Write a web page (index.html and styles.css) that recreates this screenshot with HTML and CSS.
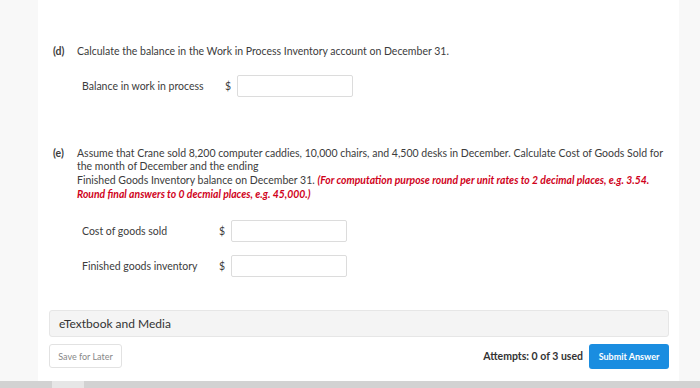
FILE: index.html
```html
<!DOCTYPE html>
<html lang="en">
<head>
<meta charset="utf-8">
<title>Question</title>
<link rel="stylesheet" href="styles.css">
</head>
<body>
<div class="page">
  <div class="side side-left"></div>
  <main class="main">
    <section class="part part-d">
      <div class="prompt">
        <span class="letter">(d)</span>
        <p class="text">Calculate the balance in the Work in Process Inventory account on December 31.</p>
      </div>
      <div class="answer-row row-d">
        <span class="label label-d">Balance in work in process</span>
        <span class="dollar">$</span>
        <span class="input"></span>
      </div>
    </section>

    <section class="part part-e">
      <div class="prompt">
        <span class="letter">(e)</span>
        <p class="text">Assume that Crane sold 8,200 computer caddies, 10,000 chairs, and 4,500 desks in December. Calculate Cost of Goods Sold for the month of December and the ending<br>Finished Goods Inventory balance on December 31. <em class="note">(For computation purpose round per unit rates to 2 decimal places, e.g. 3.54.</em> <em class="note">Round final answers to 0 decmial places, e.g. 45,000.)</em></p>
      </div>
      <div class="answer-row row-cogs">
        <span class="label label-e">Cost of goods sold</span>
        <span class="dollar">$</span>
        <span class="input input-e"></span>
      </div>
      <div class="answer-row row-fgi">
        <span class="label label-e">Finished goods inventory</span>
        <span class="dollar">$</span>
        <span class="input input-e"></span>
      </div>
    </section>

    <div class="media">eTextbook and Media</div>

    <div class="footer">
      <button class="save">Save for Later</button>
      <div class="footer-right">
        <span class="attempts">Attempts: 0 of 3 used</span>
        <button class="submit">Submit Answer</button>
      </div>
    </div>
  </main>
  <div class="side side-right"></div>
</div>
<div class="hscroll">
  <span class="hscroll-gap"></span>
  <span class="hscroll-thumb"></span>
</div>
</body>
</html>
```

FILE: styles.css
```css
html, body {
  margin: 0;
  padding: 0;
}
body {
  width: 700px;
  height: 388px;
  overflow: hidden;
  font-family: Lato, "Open Sans", "Liberation Sans", sans-serif;
  color: #3c3c3c;
  display: flex;
  flex-direction: column;
  background: #fff;
}
.page {
  display: flex;
  height: 381px;
}
.side {
  flex: none;
  background: #f8f8f8;
}
.side-left { width: 38px; }
.side-right { width: 21px; }
.main {
  flex: 1;
  min-width: 0;
  background: #fff;
  padding: 45px 10px 0 11px;
  display: flex;
  flex-direction: column;
}
.prompt {
  display: flex;
  padding-left: 4px;
  font-size: 10.5px;
  line-height: 13.7px;
}
.letter {
  width: 24px;
  flex: none;
  font-weight: 700;
}
.text {
  margin: 0;
  flex: 1;
  min-width: 0;
}
.answer-row {
  display: flex;
  align-items: center;
  padding-left: 33px;
  font-size: 10.5px;
}
.row-d { margin-top: 16px; }
.label-d { width: 143px; }
.label-e { width: 137px; }
.dollar { width: 12px; }
.input {
  width: 114px;
  height: 20px;
  border: 1px solid #dcdcdc;
  border-radius: 2px;
  background: #fff;
}
.part-e { margin-top: 50px; }
.row-cogs { margin-top: 18px; }
.row-fgi { margin-top: 13px; }
.note {
  color: #d0021b;
  font-weight: 700;
  font-style: italic;
  font-size: 10.4px;
}
.media {
  margin-top: 33px;
  height: 27px;
  background: #f4f4f4;
  border: 1px solid #e6e6e6;
  border-radius: 3px;
  box-sizing: border-box;
  padding-left: 9px;
  display: flex;
  align-items: center;
  font-size: 12px;
  color: #333;
}
.footer {
  margin-top: 7px;
  display: flex;
  justify-content: space-between;
  align-items: center;
}
.save {
  width: 73px;
  height: 24px;
  border: 1px solid #e2e2e2;
  border-radius: 3px;
  background: #fff;
  color: #888;
  font-family: inherit;
  font-size: 9px;
  padding: 0;
}
.footer-right {
  display: flex;
  align-items: center;
  gap: 6px;
}
.attempts {
  font-size: 10.5px;
  font-weight: 700;
  color: #333;
}
.submit {
  width: 80px;
  height: 25px;
  border: none;
  border-radius: 3px;
  background: #1a8de0;
  color: #fff;
  font-family: inherit;
  font-size: 9px;
  font-weight: 700;
  padding: 0;
}
.hscroll {
  display: flex;
  height: 7px;
  background: #d2d2d2;
}
.hscroll-gap { width: 52px; }
.hscroll-thumb {
  width: 32px;
  background: #e6e6e6;
}
```
